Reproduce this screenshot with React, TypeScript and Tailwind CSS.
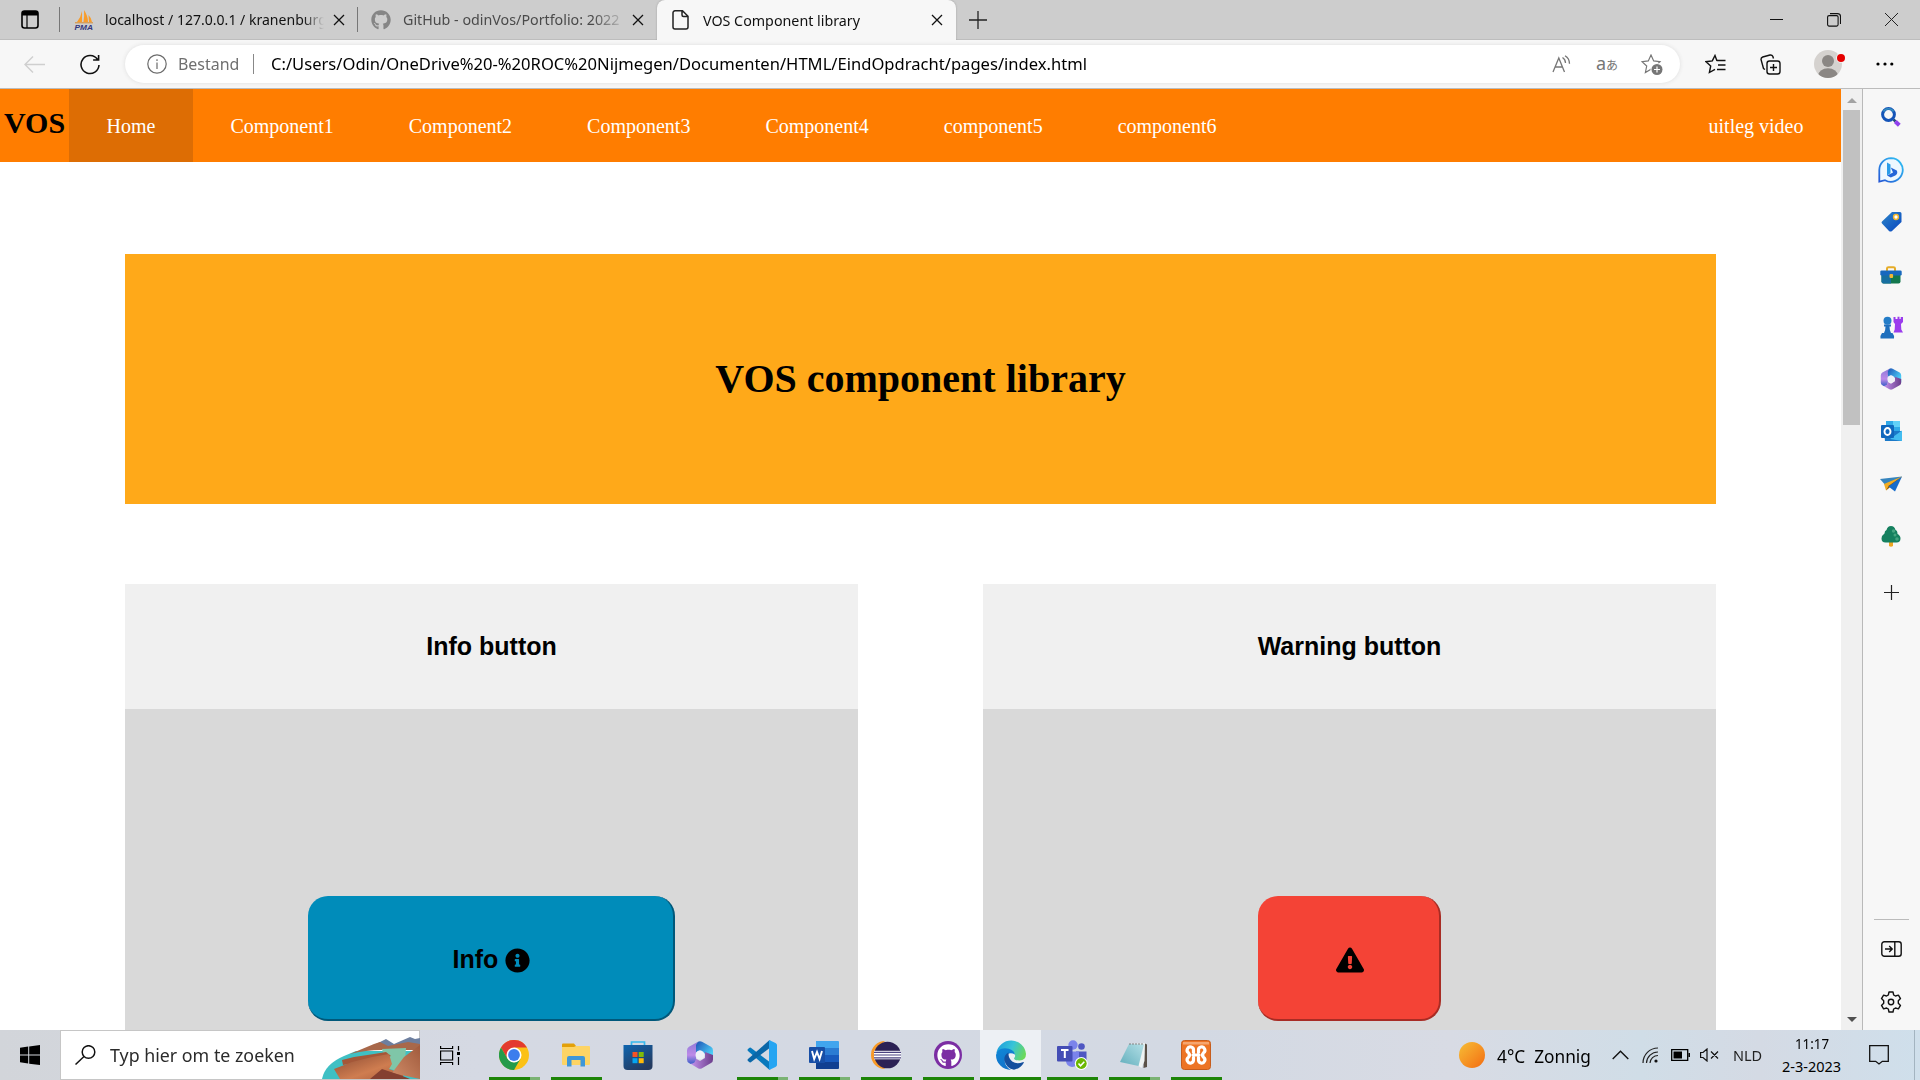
import React, { useLayoutEffect, useRef } from "react";
import { FaGithub, FaInfoCircle, FaExclamationTriangle } from "react-icons/fa";

/* Text squeezed or stretched horizontally so that it fills a given width. */
function Fit({ w, className = "", children }: { w: number; className?: string; children: React.ReactNode }) {
  const ref = useRef<HTMLSpanElement>(null);
  useLayoutEffect(() => {
    const el = ref.current;
    if (el) {
      el.style.transform = "none";
      el.style.transform = `scaleX(${w / el.offsetWidth})`;
    }
  }, [w]);
  return (
    <span className={`block shrink-0 ${className}`} style={{ width: w }}>
      <span ref={ref} className="inline-block origin-left whitespace-pre">
        {children}
      </span>
    </span>
  );
}

function Close({ className = "" }: { className?: string }) {
  return (
    <svg className={`shrink-0 ${className}`} width="12" height="12" viewBox="0 0 12 12">
      <path d="M1 1l10 10M11 1L1 11" stroke="#111" strokeWidth="1.3" />
    </svg>
  );
}

function TabStrip() {
  return (
    <div className="flex h-10 items-center border-b border-[#bdbdbd] bg-[#cdcdcd] text-[15px] text-[#111]">
      <svg className="ml-[21px] shrink-0" width="18" height="19" viewBox="0 0 18 19">
        <rect x="1" y="1" width="16" height="17" rx="2.5" fill="none" stroke="#000" strokeWidth="1.6" />
        <path d="M1 5.5V3a2.5 2.5 0 012.5-2h11A2.5 2.5 0 0117 3v2.5z" />
        <path d="M6 5v13" stroke="#000" strokeWidth="1.2" />
      </svg>
      <div className="ml-5 h-[25px] w-px bg-[#777]" />
      <svg className="ml-[14px] shrink-0 overflow-visible" width="20" height="20" viewBox="0 0 20 20">
        <path d="M8 1v11H3Q7 7 8 1zM10 0q4 6 4 12h-4.500q1-6 .5-12zM14.500 5q3 3 3.500 7h-3z" fill="#f89c2a" />
        <path d="M1 12.800h18" stroke="#d98b2c" />
        <text x="0.500" y="19.500" fontSize="7.500" fontWeight="bold" fontStyle="italic" fontFamily="Liberation Sans" fill="#34387c" textLength="18.500" lengthAdjust="spacingAndGlyphs">PMA</text>
      </svg>
      <Fit w={222} className="ml-[11px] [mask-image:linear-gradient(to_right,black_198px,transparent_219px)]">
        localhost / 127.0.0.1 / kranenburg
      </Fit>
      <Close className="ml-[6px]" />
      <div className="ml-3 h-[25px] w-px bg-[#777]" />
      <FaGithub className="ml-[13px] shrink-0 text-[#858585]" size={20} />
      <Fit w={216} className="ml-[12px] text-[#4a4a4a] [mask-image:linear-gradient(to_right,black_190px,transparent_224px)]">
        GitHub - odinVos/Portfolio: 2022
      </Fit>
      <Close className="ml-[13px]" />
      <div className="-mb-px ml-[13px] flex h-10 w-[299px] shrink-0 items-center rounded-t-lg bg-[#f7f7f7] shadow-[0_0_2px_#999] [clip-path:inset(0_-3px_0_-3px)]">
        <svg className="ml-[15px] shrink-0" width="17" height="20" viewBox="0 0 17 20">
          <path d="M3 .8h7.500l5.500 5.500V17a2 2 0 01-2 2H3a2 2 0 01-2-2V3A2 2 0 013 .8zM10 1v4a1.500 1.500 0 001.500 1.500H16" fill="none" stroke="#222" strokeWidth="1.500" />
        </svg>
        <Fit w={157} className="ml-[14px]">VOS Component library</Fit>
        <Close className="ml-[71px]" />
      </div>
      <svg className="ml-[13px] shrink-0" width="18" height="18" viewBox="0 0 18 18">
        <path d="M9 0v18M0 9h18" stroke="#222" strokeWidth="1.300" />
      </svg>
      <svg className="ml-auto shrink-0" width="13" height="13"><path d="M0 6.500h13" stroke="#111" strokeWidth="1" /></svg>
      <svg className="ml-[44px] shrink-0" width="14" height="14" viewBox="0 0 14 14">
        <rect x=".6" y="2.600" width="10.500" height="10.500" rx="1.500" fill="none" stroke="#111" strokeWidth="1.100" />
        <path d="M3 .6h7.500a3 3 0 013 3V11" fill="none" stroke="#111" strokeWidth="1.100" />
      </svg>
      <svg className="ml-[44px] mr-[22px] shrink-0" width="13" height="13"><path d="M0 0l13 13M13 0L0 13" stroke="#222" strokeWidth="1" /></svg>
    </div>
  );
}

const STAR = "M10 1l2.700 5.900 6.300.8-4.700 4.300 1.300 6.500L10 15.300 4.400 18.500 5.700 12 1 7.700l6.300-.8z";

function Toolbar() {
  return (
    <div className="flex h-[49px] items-center border-b border-[#bcbcbc] bg-[#f7f7f7] text-black">
      <svg className="ml-6 shrink-0" width="21" height="17" viewBox="0 0 21 17" fill="none" stroke="#cfcfcf" strokeWidth="1.400">
        <path d="M21 8.500H1M9 .5l-8 8 8 8" />
      </svg>
      <svg className="ml-[35px] shrink-0" width="20" height="21" viewBox="0 0 20 21" fill="none" stroke="#111" strokeWidth="1.600">
        <path d="M17.500 5.500A9 9 0 1019 11M18.600 1v5h-5.500" />
      </svg>
      <div className="ml-[25px] flex h-[38px] w-[1555px] shrink-0 items-center rounded-full bg-white shadow-[0_0_4px_#ddd]">
        <svg className="ml-[22px] shrink-0" width="20" height="20" viewBox="0 0 20 20" fill="none" stroke="#6b6b6b" strokeWidth="1.200">
          <circle cx="10" cy="10" r="9.200" /><path d="M10 8.500v6.500M10 5.300v1.600" />
        </svg>
        <Fit w={61} className="ml-[11px] text-[17px] text-[#6f6f6f]">Bestand</Fit>
        <div className="ml-[14px] h-5 w-px bg-[#888]" />
        <Fit w={816} className="ml-[17px] text-[17px]">
          C:/Users/Odin/OneDrive%20-%20ROC%20Nijmegen/Documenten/HTML/EindOpdracht/pages/index.html
        </Fit>
        <svg className="ml-auto shrink-0" width="20" height="18" viewBox="0 0 20 18" fill="none" stroke="#767676" strokeWidth="1.300">
          <path d="M1 17L6.800 3 12.500 17M3 12h7.500M10.500 2.500q3 2 3 5.500M13 .8q4.500 2.700 4.500 8" />
        </svg>
        <span className="ml-6 w-[21px] whitespace-nowrap text-[#767676]">
          <span className="text-[18px] leading-4">a</span><span className="font-['Noto_Sans_CJK_JP'] text-[12px]">あ</span>
        </span>
        <svg className="ml-6 mr-[17px] shrink-0" width="22" height="21" viewBox="0 0 22 21">
          <path d={STAR} fill="none" stroke="#767676" strokeWidth="1.200" />
          <circle cx="16" cy="15.500" r="6.500" fill="#fff" />
          <circle cx="16" cy="15.500" r="5.500" fill="#767676" />
          <path d="M16 12.500v6M13 15.500h6" stroke="#fff" strokeWidth="1.200" />
        </svg>
      </div>
      <svg className="ml-[25px] shrink-0" width="21" height="20" viewBox="0 0 21 20" fill="none" stroke="#111" strokeWidth="1.400">
        <path d="M12 6.900L10 1.500 7.300 6.900 1 7.700l4.700 4.300-1.300 6.500 5.600-3.200" />
        <path d="M12 6.500h8.500M13 11h7.500M12 15.500h8.500" />
      </svg>
      <svg className="ml-[34px] shrink-0" width="21" height="21" viewBox="0 0 21 21" fill="none" stroke="#111" strokeWidth="1.400">
        <rect x="7" y="7" width="13" height="13" rx="2.500" />
        <path d="M13.500 10v7M10 13.500h7M5 15.500l-1.500-1L1 5.500A2.500 2.500 0 012.700 3L10 1a2.500 2.500 0 013 2l.5 1.500" />
      </svg>
      <svg className="ml-[33px] shrink-0" width="32" height="28" viewBox="0 0 32 28">
        <clipPath id="avatar"><circle cx="14" cy="14" r="14" /></clipPath>
        <g clipPath="url(#avatar)"><path d="M0 0h28v28H0z" fill="#d5d2cf" /><circle cx="14" cy="11" r="6" fill="#8b8784" /><ellipse cx="14" cy="26" rx="10" ry="7.800" fill="#8b8784" /></g>
        <circle cx="27" cy="8" r="4.800" fill="#f7f7f7" />
        <circle cx="27" cy="8" r="4" fill="#e50000" />
      </svg>
      <svg className="ml-[30px] shrink-0" width="18" height="4"><circle cx="2" cy="2" r="1.600" /><circle cx="9" cy="2" r="1.600" /><circle cx="15.800" cy="2" r="1.600" /></svg>
    </div>
  );
}

function NavBar() {
  const items = ["Home", "Component1", "Component2", "Component3", "Component4", "component5", "component6"];
  return (
    <nav className="flex h-[73px] bg-[#ff7d00] font-['Liberation_Serif'] text-[20px] text-white">
      <div className="w-[69px] shrink-0 pl-1 pt-[17px] text-[30px] font-bold leading-[34px] text-black">VOS</div>
      {items.map((label, i) => (
        <div key={label} className={`flex items-center px-[37.5px] pb-px pt-px ${i === 0 ? "bg-[#dd6d04]" : ""}`}>{label}</div>
      ))}
      <div className="ml-auto flex items-center px-[37.500px] pb-px pt-px">uitleg video</div>
    </nav>
  );
}

function Card({ title, children }: { title: string; children: React.ReactNode }) {
  return (
    <section className="w-[733px] shrink-0 font-['Liberation_Sans'] text-[25px] font-bold text-black">
      <h2 className="flex h-[125px] items-center justify-center bg-[#f0f0f0]">{title}</h2>
      <div className="flex h-[400px] items-start justify-center bg-[#d9d9d9] pt-[187px]">{children}</div>
    </section>
  );
}

function WebPage() {
  return (
    <div className="h-[941px] w-[1841px] shrink-0 overflow-hidden bg-white">
      <NavBar />
      <header className="mx-[125px] mt-[92px] flex h-[250px] items-center justify-center bg-[#ffa919] font-['Liberation_Serif'] text-[40px] font-bold text-black">
        VOS component library
      </header>
      <div className="mx-[125px] mt-20 flex justify-between">
        <Card title="Info button">
          <button className="flex h-[125px] w-[367px] items-center justify-center gap-[7px] rounded-[20px] border-b-2 border-r-2 border-[#00587a] bg-[#008cba] pl-[2px] pt-[5px]">
            <span>Info</span>
            <FaInfoCircle size={25} />
          </button>
        </Card>
        <Card title="Warning button">
          <button className="flex h-[125px] w-[183px] items-center justify-center rounded-[20px] border-b-2 border-r-2 border-[#a82c24] bg-[#f44336] pl-[2px] pt-[5px]">
            <FaExclamationTriangle size={28} />
          </button>
        </Card>
      </div>
    </div>
  );
}

function Scrollbar() {
  return (
    <div className="flex w-[21px] shrink-0 flex-col items-center bg-[#f0f0f0]">
      <svg width="10" height="21" className="shrink-0"><path d="M0 14h10L5 9z" fill="#a3a3a3" /></svg>
      <div className="h-[315px] w-[17px] bg-[#c1c1c1]" />
      <svg width="10" height="21" className="mt-auto shrink-0"><path d="M0 8h10l-5 5z" fill="#505050" /></svg>
    </div>
  );
}

function M365({ id, size }: { id: string; size: number }) {
  return (
    <svg width={size} height={size} viewBox="0 0 28 28">
      <defs>
        <linearGradient id={id + "a"} x1="0" y1="0" x2="0" y2="1"><stop stopColor="#8f7ad8" /><stop offset=".6" stopColor="#bd8ae8" /><stop offset="1" stopColor="#3a5fc8" /></linearGradient>
        <linearGradient id={id + "b"} x1="0" y1="0" x2="1" y2=".8"><stop stopColor="#1f52b5" /><stop offset="1" stopColor="#50dcff" /></linearGradient>
        <linearGradient id={id + "c"} x1="0" y1="0" x2="1" y2="0"><stop stopColor="#c493ee" /><stop offset="1" stopColor="#6b3d8c" /></linearGradient>
      </defs>
      <path d="M12 .8L3 5.800Q1 7 1 9.500v9q0 2.500 2 3.600l1.500.8q5 .6 5.500-4V9z" fill={`url(#${id}a)`} />
      <path d="M12 .8q2-1.100 4 0l9 5Q27 7 27 9.500v8.500L18.500 12.500 14 9.300 10 11.500V4z" fill={`url(#${id}b)`} />
      <path d="M27 14v4.500q0 2.500-2 3.600l-9 5.100q-2 1-4 0l-7.500-4.400q5 0 5.500-5l4 2.200 5-3V11z" fill={`url(#${id}c)`} />
      <circle cx="14" cy="14" r="4.500" fill="#eef0f7" />
    </svg>
  );
}

function SideIcon({ h, children }: { h: number; children: React.ReactNode }) {
  return <div className="flex shrink-0 items-center justify-center" style={{ height: h }}>{children}</div>;
}

function Sidebar() {
  return (
    <aside className="flex h-[941px] w-[58px] shrink-0 flex-col border-l border-[#b9b9b9] bg-[#f7f7f7] pr-px">
      <SideIcon h={55}>
        <svg width="20" height="20" viewBox="0 0 20 20">
          <path d="M12.500 12.500l2 2" stroke="#274b78" strokeWidth="2.500" />
          <path d="M14.300 14.500l4 3.800" stroke="#9040ec" strokeWidth="4" />
          <circle cx="7.500" cy="7.500" r="5.900" fill="#f7f7f7" stroke="#1554b8" strokeWidth="3" />
          <path d="M2.500 4.500a5.900 5.900 0 0110 0" fill="none" stroke="#3590c0" strokeWidth="1.500" />
        </svg>
      </SideIcon>
      <SideIcon h={51}>
        <svg width="26" height="26" viewBox="0 0 26 26">
          <defs><linearGradient id="bing" x1="0" y1="1" x2="1" y2="0"><stop stopColor="#2457d5" /><stop offset="1" stopColor="#31c5f5" /></linearGradient></defs>
          <path d="M13 1.200a11.800 11.800 0 11-6 22L1.300 24.700V13A11.800 11.800 0 0113 1.200z" fill="#eef8ff" stroke="url(#bing)" strokeWidth="1.800" />
          <path d="M9 5.500l3.500 2v8.800L9 18.500z" fill="#2a9ce8" /><path d="M12.800 10.500l6 3q1.500 3-1.500 5l-4.500 2L9 18.500l6-3z" fill="#2466d8" />
        </svg>
      </SideIcon>
      <SideIcon h={52}>
        <svg width="21" height="21" viewBox="0 0 21 21">
          <defs><linearGradient id="tag" x1="0" y1="0" x2="1" y2="1"><stop stopColor="#2d86c8" /><stop offset="1" stopColor="#0846c0" /></linearGradient></defs>
          <path d="M11 1h8Q20.500 1 20.500 2.500V11L11 20q-1.500 1-3 0l-7-7.500Q0 11.500 1 10.500z" fill="url(#tag)" />
          <circle cx="15" cy="6" r="2.400" fill="#fff" stroke="#f1b52d" strokeWidth="1.500" />
        </svg>
      </SideIcon>
      <SideIcon h={55}>
        <svg width="22" height="18" viewBox="0 0 22 18">
          <path d="M7 5V2.500Q7 1.200 8.500 1.200h5q1.500 0 1.500 1.300V5" fill="none" stroke="#e5ac28" strokeWidth="2" />
          <path d="M1.500 8h19v7.500a2 2 0 01-2 2h-15a2 2 0 01-2-2z" fill="#14784e" /><path d="M1.500 8H11v9.500H3.500a2 2 0 01-2-2z" fill="#176fa0" />
          <rect x=".3" y="4.500" width="21.400" height="5" rx="1.200" fill="#1868be" /><rect x="9.500" y="8" width="3.600" height="4" rx="1" fill="#f3b735" />
        </svg>
      </SideIcon>
      <SideIcon h={50}>
        <svg width="23" height="23" viewBox="0 0 23 23">
          <path d="M13.500 1h2v2h2V.8h2V3h1.200V1H23v5l-2 2 .3 5.500 1.700 3h-9.500l1.200-3L15 8l-1.500-2z" fill="#9b3ced" />
          <circle cx="7.500" cy="4.800" r="4" fill="#247dc8" /><path d="M4 8.500h7v2H9.500q0 4 1.500 6.500h1.500q2 2.500 1.500 5.500H.5q-.5-3 1.500-5.500h2q1.500-2.500 1.500-6.500H4z" fill="#1f6fbd" />
        </svg>
      </SideIcon>
      <SideIcon h={54}><M365 id="s" size={22} /></SideIcon>
      <SideIcon h={50}>
        <svg width="21" height="20" viewBox="0 0 21 20">
          <path d="M5 0h14v12H5z" fill="#30a9e8" /><path d="M12 0h7v6h-7z" fill="#61d0f8" /><path d="M3 10h18v10H4z" fill="#1b79c8" /><path d="M21 9.500V20L9 18z" fill="#43bdf0" />
          <rect y="4" width="13" height="13" rx="1" fill="#0f67bd" /><ellipse cx="6.500" cy="10.500" rx="3" ry="3.500" fill="none" stroke="#fff" strokeWidth="1.900" />
        </svg>
      </SideIcon>
      <SideIcon h={56}>
        <svg width="22" height="16" viewBox="0 0 22 16">
          <path d="M0 3L22 .5 7 11z" fill="#3684bd" /><path d="M22 .5L4 8 6 14.500z" fill="#f3ad22" /><path d="M22 .5L9 9.500l-3 5" fill="#87520e" /><path d="M22 .5L8.500 10.500 15 15.500z" fill="#156bcb" />
        </svg>
      </SideIcon>
      <SideIcon h={49}>
        <svg width="20" height="21" viewBox="0 0 20 21">
          <path d="M8 14h4v6q-2 1.500-4 0z" fill="#eda622" />
          <path d="M10 0q3.500 0 4.500 4 2 .5 2 4 3 1.500 3 4.500 0 4-4 4h-11Q.5 16.500.5 12.500q0-3 3-5Q3.500 4.500 5.500 4 6.500 0 10 0z" fill="#15805f" />
          <circle cx="12.500" cy="5" r="1.700" fill="#46a581" /><circle cx="14" cy="9" r="1.500" fill="#46a581" /><circle cx="16" cy="13" r="1.800" fill="#46a581" />
        </svg>
      </SideIcon>
      <SideIcon h={63}>
        <svg width="15" height="15"><path d="M7.500 0v15M0 7.500h15" stroke="#222" strokeWidth="1.200" /></svg>
      </SideIcon>
      <div className="mx-auto mt-auto h-px w-[35px] shrink-0 bg-[#bbb]" />
      <SideIcon h={57}>
        <svg width="21" height="16" viewBox="0 0 21 16" fill="none" stroke="#111" strokeWidth="1.400">
          <rect x=".8" y=".8" width="19.400" height="14.400" rx="2.500" /><path d="M13.800 1v14M4 8h7M8.200 5l3 3-3 3" />
        </svg>
      </SideIcon>
      <div className="flex h-[53px] shrink-0 items-center justify-center pb-[3px]">
        <svg width="22" height="22" viewBox="0 0 22 22" fill="none" stroke="#111" strokeWidth="1.400">
          <path strokeLinejoin="round" d="M9 1h4l.7 3 1.700 1 3-.9 2.100 3.500L18.300 9.800v2.400l2.200 2.200-2.100 3.500-3-.9-1.700 1-.7 3H9l-.7-3-1.700-1-3 .9-2.100-3.500 2.200-2.200V9.800L1.500 7.600l2.100-3.500 3 .9 1.700-1z" />
          <circle cx="11" cy="11" r="2.700" />
        </svg>
      </div>
    </aside>
  );
}

function TaskApp({ run, active, children }: { run?: "one" | "many"; active?: boolean; children: React.ReactNode }) {
  return (
    <div className={`flex h-[50px] shrink-0 flex-col items-center ${active ? "ml-px w-[61px] bg-[#edf0f4]" : "w-[62px]"}`}>
      <div className="flex h-[47px] items-center justify-center pt-[3px]">{children}</div>
      {run && (
        <div className={`flex h-[3px] bg-[#1d8507] ${active ? "w-full" : "w-[51px]"}`}>
          {run === "many" && <div className="ml-auto w-[10px] bg-[#7bb374]" />}
        </div>
      )}
    </div>
  );
}

function Taskbar() {
  return (
    <div className="flex h-[50px] items-center bg-[linear-gradient(90deg,#d2d5da_0px,#d5d9e3_480px,#d3d9e3_1200px,#d8dbe4_1450px,#d0dde7_1640px,#d4dae4_1760px,#cfdfeb_1920px)] text-black">
      <div className="flex w-[60px] shrink-0 justify-center">
        <svg width="20" height="20" viewBox="0 0 20 20"><path d="M0 2.800l8.200-1.200v8H0zM9.200 1.400L20 0v9.600H9.200zM0 10.600h8.200v8L0 17.300zM9.200 10.600H20V20L9.200 18.700z" /></svg>
      </div>
      <div className="flex h-[50px] w-[360px] shrink-0 items-center border border-[#c6c6c6] bg-white">
        <svg className="ml-[14px] shrink-0" width="21" height="20" viewBox="0 0 21 20" fill="none" stroke="#111" strokeWidth="1.500"><circle cx="13.500" cy="7" r="6.300" /><path d="M9 11.500L.5 19.500" /></svg>
        <Fit w={185} className="ml-[14px] text-[18px] text-[#2b2b2b]">Typ hier om te zoeken</Fit>
        <svg className="-mr-px ml-auto shrink-0 self-end" width="98" height="42" viewBox="0 0 98 42">
          <defs>
            <linearGradient id="rockA" x1="0" y1="0" x2="1" y2="1"><stop stopColor="#8a4a33" /><stop offset=".6" stopColor="#cf7d50" /><stop offset="1" stopColor="#a85c3c" /></linearGradient>
            <linearGradient id="rockB" x1="0" y1="1" x2="1" y2="0"><stop stopColor="#d08c68" /><stop offset="1" stopColor="#a05a3c" /></linearGradient>
          </defs>
          <path d="M0 42Q3 27 22 19L34 14h64v28z" fill="#3fc0c4" />
          <path d="M50 9l14-7 8 5 16-7 5 2 5-1v12H50z" fill="#6d7f9f" />
          <path d="M28 17q12-5 24-10l6-2 8 4 10-2 10-2 12 2v6H60q-16 0-32 4z" fill="#a8684a" />
          <path d="M60 12l24-1-1 12-8 11-10-3z" fill="#7fc6a8" />
          <path d="M20 23l12-3 20-3 12-2 5 4-12 4-18 2-18 3z" fill="#a45738" />
          <path d="M12 32l18-7 20-5 17-3 3 10-3 5 14 5v5H18z" fill="url(#rockA)" />
          <path d="M98 8L82 20l-12 16 28 6z" fill="url(#rockB)" />
          <path d="M48 42l12-10 18 6 10 4z" fill="#843f30" />
        </svg>
      </div>
      <div className="flex w-[63px] shrink-0 justify-center pr-[3px]">
        <svg width="20" height="19" viewBox="0 0 20 19" fill="none" stroke="#000" strokeWidth="1.200">
          <path d="M.6 5h12v9H.6zM.6 0v2.500h12V0M.6 19v-2.500h12V19M18.500 0v4.500M18.500 11v8" /><path d="M17 6h3v3h-3z" fill="#000" stroke="none" />
        </svg>
      </div>
      <TaskApp run="many">
        <svg width="30" height="30" viewBox="0 0 30 30">
          <circle cx="15" cy="15" r="15" fill="#fbc116" />
          <path d="M2 7.500a15 15 0 0126 0H15l-6.500 11.300z" fill="#e33b2e" /><path d="M2 7.500L8.500 18.800 15 22.500l6.500-3.700L15 30A15 15 0 012 7.500z" fill="#249b4a" />
          <circle cx="15" cy="15" r="7.500" fill="#fff" /><circle cx="15" cy="15" r="5.900" fill="#3b7ded" />
        </svg>
      </TaskApp>
      <TaskApp run="one">
        <svg width="28" height="24" viewBox="0 0 28 24">
          <path d="M0 1.500Q0 .5 1 .5h11l2 2.500V6H0z" fill="#e3a008" /><path d="M0 4h12l2-1h13q1 0 1 1v17q0 1-1 1H1q-1 0-1-1z" fill="#fdd465" />
          <path d="M5 23.500V15q0-2 2-2h14q2 0 2 2v8.500h-4.500V17h-9v6.500z" fill="#3f97d8" />
        </svg>
      </TaskApp>
      <TaskApp>
        <svg width="30" height="30" viewBox="0 0 30 30">
          <defs><linearGradient id="store" x1="0" y1="0" x2=".6" y2="1"><stop stopColor="#0e65b0" /><stop offset="1" stopColor="#253b60" /></linearGradient></defs>
          <path d="M8.500 6V2h13v4" fill="none" stroke="#35b9ee" strokeWidth="1.700" /><path d="M.5 5h29v21q0 4-4 4h-21q-4 0-4-4z" fill="url(#store)" />
          <path d="M9.500 12h5v5h-5z" fill="#f35325" /><path d="M15.700 12h5v5h-5z" fill="#81bc06" /><path d="M9.500 18.200h5v5h-5z" fill="#05a6f0" /><path d="M15.700 18.200h5v5h-5z" fill="#ffba08" />
        </svg>
      </TaskApp>
      <TaskApp><M365 id="t" size={28} /></TaskApp>
      <TaskApp run="many">
        <svg width="30" height="30" viewBox="0 0 30 30">
          <path d="M3.500 7.500L24 23v6L22 29.500 1 11q-1-1 0-2l1.500-1.300z" fill="#0879bd" /><path d="M3.500 22.500L24 7V1L22 .5 1 19q-1 1 0 2l1.500 1.300z" fill="#0b67a8" />
          <path d="M22 0l6.500 3Q30 4 30 5v20q0 1-1.500 2L22 30z" fill="#26a5f2" />
        </svg>
      </TaskApp>
      <TaskApp run="many">
        <svg width="30" height="28" viewBox="0 0 30 28">
          <path d="M7 0h22q1 0 1 1v6H7z" fill="#41a5ee" /><path d="M7 7h23v7H7z" fill="#2b7cd3" /><path d="M7 14h23v7H7z" fill="#185abd" /><path d="M7 21h23v6q0 1-1 1H7z" fill="#103f91" />
          <rect y="6" width="16" height="16" rx="1" fill="#174ea6" /><path d="M3 10l2.200 8L8 11l2.600 7L13 10" fill="none" stroke="#fff" strokeWidth="1.900" />
        </svg>
      </TaskApp>
      <TaskApp run="one">
        <svg width="30" height="28" viewBox="0 0 30 28">
          <path d="M14 0A14 14 0 0014 28 18 18 0 0114 0z" fill="#f79a28" /><circle cx="16.500" cy="14" r="13.300" fill="#2c2255" />
          <path d="M3 9.800h27v8.500H3z" fill="#fff" /><path d="M3 11.300h27M3 14h27M3 16.800h27" stroke="#4b4380" strokeWidth="1.200" />
        </svg>
      </TaskApp>
      <TaskApp run="one">
        <div className="flex size-7 items-center justify-center rounded-full bg-[#7b2da3]">
          <FaGithub size={23} className="text-white" />
        </div>
      </TaskApp>
      <TaskApp run="one" active>
        <svg width="30" height="30" viewBox="0 0 30 30">
          <defs>
            <linearGradient id="edgeTop" x1="0" y1=".3" x2="1" y2=".6"><stop stopColor="#1f9fdc" /><stop offset=".5" stopColor="#37c4d8" /><stop offset="1" stopColor="#6cd957" /></linearGradient>
            <linearGradient id="edgeLow" x1="0" y1="0" x2=".3" y2="1"><stop stopColor="#0f87d6" /><stop offset="1" stopColor="#1173cb" /></linearGradient>
          </defs>
          <path d="M.3 13A15 15 0 0130 14q0 6-6.500 6.500-5.500 0-5.500-2.500 1.500-1 1-3-1-3.500-5-4.500Q6 8.500.3 13z" fill="url(#edgeTop)" />
          <path d="M0 15Q1 8.500 9 8.300q8.500.2 10 6.200-7-4-10 4-1.500 7 6 11.500A15 15 0 010 15z" fill="url(#edgeLow)" />
          <path d="M12.500 12.500Q7.500 15 8.500 21q2 7.500 9.500 8.700 6.500-1.200 10-7.200-.5-.7-1.300-.3-6 2.300-10.500-.7-4-3-3.700-9z" fill="#144f9d" />
        </svg>
      </TaskApp>
      <TaskApp run="one">
        <svg width="31" height="30" viewBox="0 0 31 30">
          <circle cx="24.500" cy="6.500" r="3.300" fill="#4f57c2" /><path d="M19 11.500h10.500v9q0 4-5 5H19z" fill="#4f57c2" /><circle cx="16" cy="5" r="4.700" fill="#7b83eb" /><path d="M9 11.500h13v10q-1 5-7 5.500-6-1-6-6z" fill="#7b83eb" />
          <rect y="6" width="15.500" height="15.500" rx="1" fill="#444db5" /><path d="M4 10h7.500M7.800 10v8" stroke="#fff" strokeWidth="2" />
          <circle cx="24.300" cy="23.500" r="6.500" fill="#fff" /><circle cx="24.300" cy="23.500" r="5.400" fill="#6bb700" /><path d="M21.500 23.500l2 2.200 3.800-4" fill="none" stroke="#fff" strokeWidth="1.600" />
        </svg>
      </TaskApp>
      <TaskApp run="many">
        <svg width="28" height="27" viewBox="0 0 28 27">
          <path d="M24 1l3 1.500V25l-3.500 1z" fill="#5a5148" /><path d="M9 2L25 1l-.5 18-3 7-3-2z" fill="#eef3f3" />
          <defs><linearGradient id="note" x1="0" y1="1" x2="1" y2="0"><stop stopColor="#62aebc" /><stop offset="1" stopColor="#b4e0e7" /></linearGradient></defs>
          <path d="M9 2l15 .5L18.500 24 0 20z" fill="url(#note)" /><path d="M10 1v2M13 1v2M16 1v2M19 1v2M22 1v2" stroke="#777" strokeWidth=".9" />
        </svg>
      </TaskApp>
      <TaskApp run="one">
        <svg width="30" height="30" viewBox="0 0 30 30">
          <rect x=".5" y=".5" width="29" height="29" rx="3" fill="#ed7425" stroke="#c65d1d" /><path d="M2 2h26v2.500H2z" fill="#f6a66f" />
          <path d="M12.500 12.500V10.500a3.200 3.200 0 10-5 2.300q2 2.200 0 4.400a3.200 3.200 0 105 2.300V17.500M17.500 12.500V10.500a3.200 3.200 0 115 2.300q-2 2.200 0 4.400a3.200 3.200 0 11-5 2.300V17.500M12 15h6" fill="none" stroke="#fff" strokeWidth="3.200" strokeLinecap="round" strokeLinejoin="round" />
        </svg>
      </TaskApp>
      <div className="ml-auto size-[26px] shrink-0 rounded-full bg-linear-to-br from-[#f5bd35] to-[#f26a10]" />
      <Fit w={94} className="ml-[12px] pt-[3px] text-[18px]">4°C  Zonnig</Fit>
      <svg className="ml-[21px] shrink-0" width="17" height="10" viewBox="0 0 17 10"><path d="M.7 9l7.800-7.800L16.300 9" fill="none" stroke="#111" strokeWidth="1.400" /></svg>
      <svg className="ml-[13px] shrink-0" width="17" height="17" viewBox="0 0 17 17" fill="none" stroke="#222" strokeWidth="1.200">
        <path d="M1 16A15 15 0 0116 1M4.500 16A11.500 11.500 0 0116 5M8 16a8 8 0 018-7.500M11 16" /><circle cx="14" cy="14" r="1.600" fill="#111" stroke="none" />
      </svg>
      <svg className="ml-[12px] shrink-0" width="19" height="12" viewBox="0 0 19 12"><path d="M.7.7h16v10.600H.7zM18.300 4v4" fill="none" stroke="#000" strokeWidth="1.300" /><path d="M2.500 2.500h8.500v7H2.500z" /></svg>
      <svg className="ml-[10px] shrink-0" width="19" height="14" viewBox="0 0 19 14" fill="none" stroke="#111" strokeWidth="1.200"><path d="M.6 4.500H3L7 1v12L3 9.500H.6zM11 3.500l7 7M18 3.500l-7 7" /></svg>
      <Fit w={29} className="ml-[14px] text-[15px] text-[#222]">NLD</Fit>
      <div className="ml-5 flex w-[59px] shrink-0 flex-col items-center text-[14.500px] leading-[23px]">
        <Fit w={34}>11:17</Fit>
        <Fit w={59}>2-3-2023</Fit>
      </div>
      <svg className="ml-[28px] shrink-0" width="20" height="20" viewBox="0 0 20 20"><path d="M.7.7h18.600v15.600h-6L10 19l-3.300-2.700h-6z" fill="none" stroke="#111" strokeWidth="1.300" /></svg>
      <div className="ml-[25px] mr-[5px] h-full w-px shrink-0 bg-[#a3b4c0]" />
    </div>
  );
}

export default function App() {
  return (
    <div className="h-[1080px] w-[1920px] overflow-hidden bg-white font-['Noto_Sans',sans-serif]">
      <TabStrip />
      <Toolbar />
      <div className="flex">
        <WebPage />
        <Scrollbar />
        <Sidebar />
      </div>
      <Taskbar />
    </div>
  );
}
